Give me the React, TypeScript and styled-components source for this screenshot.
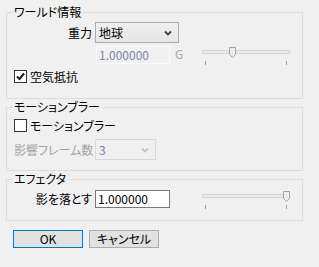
import styled, { createGlobalStyle } from 'styled-components'

const GlobalStyle = createGlobalStyle`
  body {
    margin: 0;
    background: #f0f0f0;
    font-family: "Noto Sans CJK JP", "Liberation Sans", sans-serif;
    font-size: 12px;
    font-feature-settings: "palt";
    color: #000000;
  }
`

const Dialog = styled.div`
  width: 297px;
  padding: 4px 0 0 6px;
`

const Group = styled.fieldset<{ $pt: number; $pb: number }>`
  margin: 0;
  padding: ${p => p.$pt}px 7px ${p => p.$pb}px 7px;
  border: 1px solid #dcdcdc;
  min-width: 0;
`

const Legend = styled.legend`
  padding: 0 2px;
  margin-left: -2px;
  font-size: 12px;
  line-height: 16px;
  height: 16px;
`

const Row = styled.div<{ $mt?: number }>`
  display: flex;
  align-items: flex-start;
  margin-top: ${p => p.$mt || 0}px;
`

const Label = styled.div<{ $h: number; $disabled?: boolean }>`
  width: 78px;
  margin-right: 3px;
  text-align: right;
  white-space: nowrap;
  height: ${p => p.$h}px;
  line-height: ${p => p.$h}px;
  color: ${p => (p.$disabled ? '#a3a3a3' : '#000000')};
`

const Spacer = styled.div`
  width: 82px;
  flex: none;
`

const SelectBox = styled.div<{ $width: number; $disabled?: boolean }>`
  box-sizing: border-box;
  width: ${p => p.$width}px;
  height: 21px;
  display: flex;
  align-items: center;
  justify-content: space-between;
  padding: 0 6px 0 3px;
  border: 1px solid ${p => (p.$disabled ? '#d9d9d9' : '#acacac')};
  background: ${p => (p.$disabled ? '#f0f0f0' : 'linear-gradient(#f0f0f0, #e5e5e5)')};
  color: ${p => (p.$disabled ? '#7d86a3' : '#000000')};
  line-height: 19px;
`

const TextBox = styled.div<{ $width: number; $h: number; $disabled?: boolean }>`
  box-sizing: border-box;
  width: ${p => p.$width}px;
  height: ${p => p.$h}px;
  padding-left: 2px;
  border: 1px solid ${p => (p.$disabled ? '#fbfbfb' : '#7a7a7a')};
  background: ${p => (p.$disabled ? '#f0f0f0' : '#ffffff')};
  color: ${p => (p.$disabled ? '#7d86a3' : '#000000')};
  line-height: ${p => p.$h - 2}px;
`

const Unit = styled.div`
  margin-left: 5px;
  line-height: 16px;
  color: #a8a8a8;
`

const SliderWrap = styled.div`
  margin-left: auto;
  margin-top: -1px;
  width: 96px;
  height: 22px;
`

const CheckRow = styled.label<{ $mt?: number }>`
  display: flex;
  align-items: center;
  gap: 3px;
  height: 13px;
  line-height: 13px;
  margin-top: ${p => p.$mt || 0}px;
`

const Box = styled.span`
  box-sizing: border-box;
  width: 13px;
  height: 13px;
  border: 1px solid #333333;
  background: #ffffff;
  display: flex;
  align-items: center;
  justify-content: center;
`

const Buttons = styled.div`
  display: flex;
  gap: 6px;
  margin: 9px 0 0 7px;
`

const Button = styled.button<{ $focus?: boolean }>`
  box-sizing: border-box;
  width: 70px;
  height: 18px;
  padding: 0;
  font: inherit;
  line-height: 16px;
  color: #000000;
  background: #e1e1e1;
  border: 1px solid ${p => (p.$focus ? '#0078d7' : '#adadad')};
`

const Chevron = ({ disabled }: { disabled?: boolean }) => (
  <svg width="8" height="6" viewBox="0 0 8 6">
    <path d="M1 1.5 L4 4.5 L7 1.5" fill="none" stroke={disabled ? '#c4c4c4' : '#404040'} strokeWidth="1.8" />
  </svg>
)

const Slider = ({ value }: { value: number }) => {
  const cx = 6.5 + value * 81
  const x = cx - 3.5
  return (
    <SliderWrap>
      <svg width="96" height="22" viewBox="0 0 96 22">
        <rect x="3.5" y="5.5" width="87" height="3" fill="#e7eaea" stroke="#d6d6d6" />
        <path
          d={`M${x + 0.5} 2.5 h6 v7 l-3 3 l-3 -3 z`}
          fill="#ececec"
          stroke="#a5a5a5"
        />
        <line x1="6.5" y1="16" x2="6.5" y2="20" stroke="#a0a0a0" />
        <line x1="87.5" y1="16" x2="87.5" y2="20" stroke="#a0a0a0" />
      </svg>
    </SliderWrap>
  )
}

const Check = ({ checked, label }: { checked: boolean; label: string }) => (
  <>
    <Box>
      {checked && (
        <svg width="9" height="9" viewBox="0 0 9 9">
          <path d="M1 4.5 L3.5 7 L8 1.5" fill="none" stroke="#202020" strokeWidth="2" />
        </svg>
      )}
    </Box>
    <span>{label}</span>
  </>
)

export default function App() {
  return (
    <>
      <GlobalStyle />
      <Dialog>
        <Group $pt={2} $pb={15}>
          <Legend>ワールド情報</Legend>
          <Row>
            <Label $h={21}>重力</Label>
            <SelectBox $width={84}>
              <span>地球</span>
              <Chevron />
            </SelectBox>
          </Row>
          <Row $mt={3}>
            <Spacer />
            <TextBox $width={74} $h={18} $disabled>1.000000</TextBox>
            <Unit>G</Unit>
            <Slider value={1 / 3} />
          </Row>
          <CheckRow $mt={3}>
            <Check checked label="空気抵抗" />
          </CheckRow>
        </Group>
        <Group $pt={4} $pb={10}>
          <Legend>モーションブラー</Legend>
          <CheckRow>
            <Check checked={false} label="モーションブラー" />
          </CheckRow>
          <Row $mt={7}>
            <Label $h={21} $disabled>影響フレーム数</Label>
            <SelectBox $width={61} $disabled>
              <span>3</span>
              <Chevron disabled />
            </SelectBox>
          </Row>
        </Group>
        <Group $pt={3} $pb={9}>
          <Legend>エフェクタ</Legend>
          <Row>
            <Label $h={18}>影を落とす</Label>
            <TextBox $width={75} $h={18}>1.000000</TextBox>
            <Slider value={1} />
          </Row>
        </Group>
        <Buttons>
          <Button $focus>OK</Button>
          <Button>キャンセル</Button>
        </Buttons>
      </Dialog>
    </>
  )
}
